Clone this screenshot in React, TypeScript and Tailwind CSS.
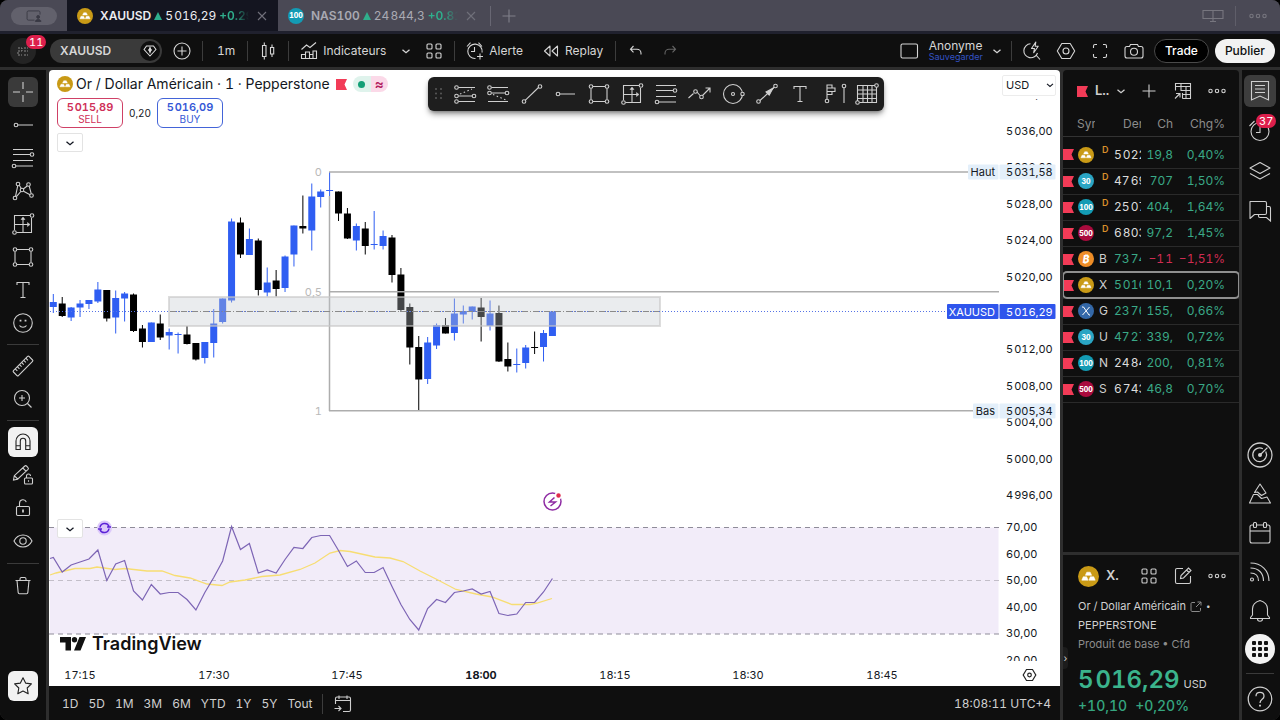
import type { ReactNode } from 'react';
import clsx from 'clsx';

type Tone = 'up' | 'down' | 'flat';

interface WatchRow {
  id: string;
  badge: BadgeKind;
  symbol: string;
  delayed?: boolean;
  last: string;
  lastTone: Tone;
  change: string;
  percent: string;
  tone: Tone;
}

type BadgeKind = 'gold' | '30' | '100' | '500' | 'btc' | 'x';

const WATCHLIST: WatchRow[] = [
  { id: 'gc', badge: 'gold', symbol: '', delayed: true, last: '5\u200a022', lastTone: 'flat', change: '19,8', percent: '0,40%', tone: 'up' },
  { id: 'ym', badge: '30', symbol: '', delayed: true, last: '47\u200a69', lastTone: 'flat', change: '707', percent: '1,50%', tone: 'up' },
  { id: 'nq', badge: '100', symbol: '', delayed: true, last: '25\u200a07', lastTone: 'flat', change: '404,', percent: '1,64%', tone: 'up' },
  { id: 'es', badge: '500', symbol: '', delayed: true, last: '6\u200a803', lastTone: 'flat', change: '97,2', percent: '1,45%', tone: 'up' },
  { id: 'btc', badge: 'btc', symbol: 'B', last: '73\u200a74', lastTone: 'up', change: '−1\u200a1', percent: '−1,51%', tone: 'down' },
  { id: 'xau', badge: 'gold', symbol: 'X', last: '5\u200a016', lastTone: 'up', change: '10,1', percent: '0,20%', tone: 'up' },
  { id: 'ger', badge: 'x', symbol: 'G', last: '23\u200a76', lastTone: 'up', change: '155,', percent: '0,66%', tone: 'up' },
  { id: 'us30', badge: '30', symbol: 'U', last: '47\u200a27', lastTone: 'up', change: '339,', percent: '0,72%', tone: 'up' },
  { id: 'nas', badge: '100', symbol: 'N', last: '24\u200a84', lastTone: 'flat', change: '200,', percent: '0,81%', tone: 'up' },
  { id: 'spx', badge: '500', symbol: 'S', last: '6\u200a743', lastTone: 'flat', change: '46,8', percent: '0,70%', tone: 'up' },
];

const TONES: Record<Tone, string> = {
  up: 'text-[#3aa987]',
  down: 'text-[#d02c52]',
  flat: 'text-[#dbdbdb]',
};

// [high, low, body top, body bottom, rising], one per minute from 17:12
const CANDLES: [number, number, number, number, 0 | 1][] = [
  [294, 313, 302, 307, 1], [297, 317, 303.5, 316, 0], [307, 321, 307.5, 317.5, 1], [300, 317, 303.5, 307.5, 1],
  [300, 309, 300, 304, 1], [282, 303, 289.5, 301.5, 1], [290, 321.5, 290, 318.5, 0], [290.5, 333.5, 298, 317.5, 1],
  [292, 321.5, 293.5, 298.5, 1], [293.5, 332, 294.5, 331, 0], [325, 347.5, 328.5, 342, 0], [322.5, 342, 322.5, 342, 1],
  [314.5, 340, 323.5, 337.5, 0], [328.5, 349.5, 332, 335.5, 1], [332.5, 353.5, 334, 335, 1], [326, 344.5, 334.5, 344, 0],
  [343, 360.5, 343, 359.5, 0], [342, 363.5, 342, 358, 1], [309, 357.5, 323.5, 343, 1], [298.5, 323.5, 298.5, 322, 1],
  [218.5, 302.5, 221.5, 300.5, 1], [217.5, 258, 222.5, 254.5, 0], [228.5, 255, 239, 255, 1], [238.5, 295.5, 240.5, 290, 0],
  [267.5, 296.5, 282.5, 292.5, 1], [270, 296.5, 280.5, 289, 0], [255.5, 292, 256.5, 288, 1], [225.5, 266.5, 225.5, 254.5, 1],
  [195.5, 233.5, 226, 228.5, 0], [183.5, 250.5, 196.5, 230.5, 1], [189.5, 207.5, 191.5, 197, 1], [172, 196, 190, 191, 1],
  [191.5, 221, 191.5, 213.5, 0], [208, 239, 213.5, 238.5, 0], [223.5, 250.5, 226, 240.5, 1], [222, 254.5, 228.5, 246, 0],
  [211, 249.5, 244, 245, 1], [230.5, 249.5, 236, 246, 1], [235, 282.5, 237.5, 275, 0], [268, 312, 274.5, 310, 0],
  [303.5, 364.5, 307, 347.5, 0], [336, 411, 347, 379.5, 0], [337, 384, 342.5, 379, 1], [323.5, 349, 325, 345.5, 1],
  [318, 333.5, 325, 333.5, 0], [298.5, 340.5, 313.5, 333, 1], [305.5, 323.5, 311, 314.5, 1], [306.5, 319.5, 306.5, 312, 1],
  [298, 341.5, 307.5, 317, 0], [300.5, 330.5, 313.5, 326, 1], [305.5, 362, 313, 361.5, 0], [342.5, 371.5, 359, 366.5, 0],
  [348.5, 372.5, 364, 365, 1], [345, 368.5, 347.5, 363, 1], [331.5, 354, 347, 348, 0], [330, 361.5, 333, 347, 1],
  [311.5, 336, 311.5, 336, 1],
];

const RSI = [
  557.5, 572, 565, 562, 559, 550, 580.5, 564, 560.5, 591, 600, 584.5, 594, 592.5, 592.5, 599.5, 610, 592.5, 577.5,
  561, 526.5, 549.5, 543.5, 573, 570, 573, 559.5, 547.5, 548.5, 537.5, 535.5, 535.5, 550.5, 566.5, 561, 572.5, 572.5,
  567.5, 586.5, 604.5, 619.5, 630, 608.5, 599.5, 602.5, 592.5, 591, 589, 594, 591.5, 613.5, 615.5, 614, 602.5, 602.5,
  592, 578.5,
];

const RSI_MA =
  '50,575 56,573 75,568.5 90,568.5 97,567 115,569.5 125,568.5 147,571 162,571 175,575.5 190,578 207,584 222,585.5 230,582 245,580 262,576.5 280,575 300,569.5 315,563 330,553 340,550.5 350,551.5 375,557 390,558 403,561.5 420,571 436,579 456,589.5 476,594 492,597 512,604.5 530,604.5 537,603 552,598.5';

const PRICE_TICKS: [string, number][] = [
  ['5\u200a040,00', 94], ['5\u200a036,00', 131], ['5\u200a032,00', 167], ['5\u200a028,00', 204], ['5\u200a024,00', 240],
  ['5\u200a020,00', 277], ['5\u200a012,00', 349], ['5\u200a008,00', 386], ['5\u200a004,00', 422], ['5\u200a000,00', 459],
  ['4\u200a996,00', 495], ['70,00', 527], ['60,00', 554], ['50,00', 580], ['40,00', 607], ['30,00', 633], ['20,00', 660],
];

const TIME_TICKS: [string, number][] = [
  ['17:15', 80], ['17:30', 214], ['17:45', 347], ['18:00', 481], ['18:15', 615], ['18:30', 748], ['18:45', 882],
];

const RANGES = ['1D', '5D', '1M', '3M', '6M', 'YTD', '1Y', '5Y', 'Tout'];

const timeX = (i: number) => 53.3 + i * 8.913;

/* ---------- icons ---------- */

function Icon({ children, className }: { children: ReactNode; className?: string }) {
  return (
    <svg
      viewBox="0 0 28 28"
      className={clsx('shrink-0', className ?? 'size-7')}
      fill="none"
      stroke="currentColor"
      strokeWidth={1.1}
      aria-hidden="true"
    >
      {children}
    </svg>
  );
}

function Node({ x, y }: { x: number; y: number }) {
  return <circle cx={x} cy={y} r={1.8} />;
}

const CrossIcon = () => <Icon><path d="M4 14h7M17 14h7M14 4v7M14 17v7" /></Icon>;
const RayIcon = () => <Icon><Node x={7} y={14} /><path d="M9 14h15" /></Icon>;
const FibIcon = () => (
  <Icon>
    <path d="M4 5.500h20M4 10.500h17M4 16.500h20M7 22h17" />
    <Node x={23} y={10.5} /><Node x={5} y={22} />
  </Icon>
);
const PatternIcon = () => (
  <Icon>
    <path d="M8.700 8.800 6.500 19.300M10.300 8.300l2 3.200M14.300 12l3.900-3M20.200 9.200l2 7.500M7.400 19.700l4.400-5.200M14.600 14.200l6.400 3.500" />
    <Node x={9} y={7} /><Node x={19.5} y={7.5} /><Node x={22.5} y={18.5} /><Node x={6} y={21} /><Node x={13} y={13} />
  </Icon>
);
const PositionIcon = () => (
  <Icon>
    <path d="M21 5.500H5.500V20M7.500 22.500h15V8M14 9v13.500M5.500 14.500H19" />
    <path d="m12 9.500 2-2.500 2 2.500ZM18.500 12.500l2.500 2-2.500 2Z" fill="currentColor" strokeWidth={0.5} />
    <Node x={23} y={5.5} /><Node x={5.5} y={22.5} />
  </Icon>
);
const RectIcon = () => (
  <Icon>
    <path d="M8 6.500h12M8 21.500h12M6 8.500v11M22 8.500v11" />
    <Node x={6} y={6.5} /><Node x={22} y={6.5} /><Node x={6} y={21.5} /><Node x={22} y={21.5} />
  </Icon>
);
const TextIcon = () => <Icon><path d="M8 9V6.500h12V9M14 6.500v15M11.500 21.500h5" /></Icon>;
const SmileIcon = () => (
  <Icon>
    <circle cx="14" cy="14" r="9.300" />
    <path d="M10.500 16.500c1.500 2.300 5.500 2.300 7 0" />
    <path d="M11.500 10.800v1.600M16.500 10.800v1.600" strokeWidth={1.8} />
  </Icon>
);
const RulerIcon = () => (
  <Icon>
    <g transform="rotate(-45 14 14)">
      <rect x="3" y="10.500" width="22" height="7" rx="1" />
      <path d="M6.500 10.500v3M9.500 10.500v3M12.500 10.500v3M15.500 10.500v3M18.500 10.500v3M21.500 10.500v3" />
    </g>
  </Icon>
);
const ZoomIcon = () => <Icon><circle cx="13" cy="13" r="7.500" /><path d="m18.500 18.500 4 4M13 10v6M10 13h6" /></Icon>;
const MagnetIcon = () => (
  <Icon>
    <path d="M7 21.500V13a7 7 0 0 1 14 0v8.500h-4.300V13a2.700 2.700 0 0 0-5.400 0v8.500ZM7 17.800h4.300M16.700 17.800H21" />
  </Icon>
);
const PencilLockIcon = () => (
  <Icon>
    <path d="m4.500 19 .8-4.300L15.800 5c.5-.5 1.200-.5 1.700 0l1.500 1.600c.5.5.5 1.200 0 1.700L8.600 18.200ZM13.800 7l3.200 3.200M5.500 14.800l3.200 3.200" />
    <rect x="15.500" y="17" width="8" height="6" rx="1" />
    <path d="M17.500 17v-2a2 2 0 0 1 4 0M19.500 19.300v1.500" />
  </Icon>
);
const LockIcon = () => (
  <Icon>
    <rect x="7.500" y="12.500" width="13" height="9" rx="1.200" />
    <path d="M10.500 12.500V9.300a3.500 3.500 0 0 1 6.800-1.200" />
    <path d="M14 15.500v3" strokeWidth={1.8} />
  </Icon>
);
const EyeIcon = () => (
  <Icon><path d="M5 14c4-8 14-8 18 0-4 8-14 8-18 0Z" /><circle cx="14" cy="14" r="3.200" /></Icon>
);
const TrashIcon = () => (
  <Icon><path d="M6.500 8.500h15M8 8.500l1.200 12.200c.1.700.5 1 1.100 1h7.400c.6 0 1-.3 1.100-1L20 8.500M11 8.500V7c0-.9.500-1.500 1.400-1.500h3.200c.9 0 1.400.6 1.400 1.500v1.500" /></Icon>
);
const StarIcon = () => (
  <Icon><path d="m14 5.800 2.600 5.300 5.800.8-4.200 4.100 1 5.800-5.200-2.700-5.200 2.700 1-5.800-4.200-4.100 5.800-.8Z" strokeLinejoin="round" /></Icon>
);
const ChevronIcon = ({ className }: { className?: string }) => (
  <Icon className={className}><path d="m10.500 12.700 3.500 3 3.500-3" strokeWidth={1.3} /></Icon>
);
const PlusCircleIcon = () => <Icon><circle cx="14" cy="14" r="8" /><path d="M14 9.500v9M9.500 14h9" /></Icon>;
const CandlesIcon = () => (
  <Icon><path d="M8.500 8.500H12v11H8.500zM10.300 5.500v3M10.300 19.500v3M16.500 10.500h3.200v6.500h-3.200zM18 7.500v3M18 17v3" /></Icon>
);
const IndicatorsIcon = () => (
  <Icon>
    <path d="M6.500 21.500v-4h4v4zM10.500 21.500V15h4v6.500M14.500 17.500h3.500v4M18 21.500V14h3.500v7.500ZM6.500 21.500h15" />
    <path d="m6.500 12.500 5-4.500 3.500 2.500 6-5" />
  </Icon>
);
const GridIcon = () => (
  <Icon>
    <rect x="7" y="7" width="5" height="5" rx="1" /><rect x="16" y="7" width="5" height="5" rx="1" />
    <rect x="7" y="16" width="5" height="5" rx="1" /><rect x="16" y="16" width="5" height="5" rx="1" />
  </Icon>
);
const AlertIcon = () => (
  <Icon>
    <path d="M14.500 21.500a7.200 7.200 0 1 1 6.600-6M13.500 10v4.500H10M6 9.500l3.500-3.800M17.500 5.700 21 9.500M19 16.500v6M16 19.500h6" />
  </Icon>
);
const ReplayIcon = () => <Icon><path d="M13 9v10l-5.500-5ZM20.500 9v10L15 14Z" strokeLinejoin="round" /></Icon>;
const UndoIcon = () => <Icon><path d="m11.500 9-3 3.200 3 3.200M8.800 12.200H15a4 4 0 0 1 4 4v1.300" /></Icon>;
const RedoIcon = () => <Icon><path d="m16.500 9 3 3.200-3 3.200M19.200 12.200H13a4 4 0 0 0-4 4v1.300" /></Icon>;
const LayoutIcon = () => <Icon><rect x="6" y="7" width="16.500" height="14" rx="1.500" /></Icon>;
const QuickSearchIcon = () => (
  <Icon>
    <path d="M12.500 6.800a7 7 0 1 0 7 9.200M18 18l4 4.500M17.800 5 13.500 11.500h3l-.8 4.200 4.500-6.500h-3Z" strokeLinejoin="round" />
  </Icon>
);
const HexIcon = ({ className }: { className?: string }) => (
  <Icon className={className}>
    <path d="M9.800 6.500h8.400L22.700 14l-4.500 7.500H9.800L5.300 14Z" strokeLinejoin="round" /><circle cx="14" cy="14" r="3" />
  </Icon>
);
const FullscreenIcon = () => (
  <Icon><path d="M7.500 11V9c0-1 .5-1.500 1.500-1.500h2M17 7.500h2c1 0 1.500.5 1.500 1.500v2M20.500 17v2c0 1-.5 1.500-1.500 1.500h-2M11 20.500H9c-1 0-1.500-.5-1.500-1.500v-2" /></Icon>
);
const CameraIcon = () => (
  <Icon>
    <path d="M10.500 7.500h7l1 2H21c1.300 0 2 .7 2 2V19c0 1.300-.7 2-2 2H7c-1.300 0-2-.7-2-2v-7.500c0-1.300.7-2 2-2h2.500Z" />
    <circle cx="14" cy="14.800" r="3.500" />
  </Icon>
);
const DotsIcon = () => (
  <Icon><circle cx="7.500" cy="14" r="1.700" /><circle cx="14" cy="14" r="1.700" /><circle cx="20.500" cy="14" r="1.700" /></Icon>
);
const PlusIcon = () => <Icon><path d="M14 7.500v13M7.500 14h13" /></Icon>;
const CloseIcon = () => <Icon><path d="m10 10 8 8M18 10l-8 8" /></Icon>;
const TableIcon = () => (
  <Icon>
    <path d="M6.500 13.500v-7h15v15h-8M6.500 9.500h15M12 6.500v7.500M17 9.500v12M12 13.500h9.500M13.500 17.500h8M13.500 16v5.500M6 21.500l4.500-4.500M7 16.500h4v4" />
  </Icon>
);

/* favourites bar only */
const ChannelUpIcon = () => (
  <Icon>
    <path d="M7.500 7.500H24M7.500 16h13.500M7.500 21.500H24" />
    <path d="m9 14 12-5" strokeDasharray="1.500 2.500" />
    <Node x={5.5} y={7.5} /><Node x={5.5} y={16} /><Node x={23} y={16} /><Node x={5.5} y={21.5} />
  </Icon>
);
const ChannelDownIcon = () => (
  <Icon>
    <path d="M7.500 7.500H24M7.500 13h13.500M4 21.500h20" />
    <path d="m9 14.500 13 5.500" strokeDasharray="1.500 2.500" />
    <Node x={5.5} y={7.5} /><Node x={5.5} y={13} /><Node x={23} y={13} />
  </Icon>
);
const TrendLineIcon = () => <Icon><path d="M7.200 20.300 20.500 7.500" /><Node x={6} y={21.5} /><Node x={22} y={6.5} /></Icon>;
const PathIcon = () => (
  <Icon>
    <path d="m3.500 18 5-4.500M12 12l3 3.500M17.500 15.500 25 8M20.500 8H25v4.500" />
    <Node x={10.5} y={11.5} /><Node x={16.5} y={17} />
  </Icon>
);
const CircleToolIcon = () => (
  <Icon><circle cx="14" cy="14" r="9.500" /><circle cx="14" cy="14" r="1.500" /><circle cx="23.500" cy="14" r="1.700" fill="#1e1e1e" /></Icon>
);
const ArrowToolIcon = () => (
  <Icon>
    <path d="M7 20.500 21 7.500" /><path d="m13 12 7-3.800-3.800 7Z" fill="currentColor" />
    <Node x={5.5} y={21.5} /><Node x={22.5} y={6} />
  </Icon>
);
const VolumeProfileIcon = () => (
  <Icon>
    <path d="M7 4.500V19M7 5h5v3H7M7 8h8v3.500H7M7 11.500h5v3H7M24 8v15" />
    <Node x={7} y={21} /><Node x={24} y={6} />
  </Icon>
);
const GannIcon = () => (
  <Icon>
    <path d="M22 5.500H4.500V21M6.500 22.500h17V7M10 5.500v17M14.500 5.500v17M19 5.500v17M4.500 10h19M4.500 14h19M4.500 18.500h19" />
    <Node x={23.5} y={5.5} /><Node x={4.5} y={22.5} />
  </Icon>
);

/* right rail only */
const WatchlistIcon = () => (
  <Icon><path d="M5.500 4.500h17v18.500l-8.500-4-8.500 4ZM9 8.500h10M9 12h10M9 15.500h10" /></Icon>
);
const AlarmIcon = () => <Icon><circle cx="14" cy="14.500" r="9" /><path d="M14 9v6.500h-4M3.500 9 8.500 4" /></Icon>;
const LayersIcon = () => (
  <Icon><path d="m14 5.500 10 5.500-10 5.500L4 11ZM4 16.500l10 5.500 10-5.500" strokeLinejoin="round" /></Icon>
);
const ChatIcon = () => (
  <Icon>
    <path d="M4 4.500h15c1 0 1.500.5 1.500 1.500v10c0 1-.5 1.500-1.500 1.500H8.500L4 21.500Z" strokeLinejoin="round" />
    <path d="M20.500 9.500H23c1 0 1.500.5 1.500 1.500v13l-4-3.500h-6.500c-1 0-1.500-.5-1.500-1.500v-1.500" />
  </Icon>
);
const RadarIcon = () => (
  <Icon className="size-8">
    <circle cx="14" cy="14" r="10.500" /><path d="M19 11a6 6 0 1 1-2.500-2.500M14 14l6.500-6.500" />
    <circle cx="14" cy="14" r="1.200" fill="currentColor" />
  </Icon>
);
const PineIcon = () => (
  <Icon>
    <path d="m14 4-5.500 8.500 3-.5 4 3.500 4.500-2.500ZM7.500 14.500 3.500 23h21l-3.500-6-5.500 1.500-4-4Z" strokeLinejoin="round" />
  </Icon>
);
const CalendarIcon = () => (
  <Icon>
    <rect x="4" y="6" width="20" height="18" rx="2" /><path d="M4 12h20" />
    <rect x="7.500" y="3.500" width="3" height="5" rx="1" fill="#0f0f0f" /><rect x="17.500" y="3.500" width="3" height="5" rx="1" fill="#0f0f0f" />
  </Icon>
);
const FeedIcon = () => (
  <Icon><circle cx="6" cy="21.500" r="1.500" /><path d="M4.500 15c5 0 8 3 8 8M4.500 10c8 0 13 5 13 13M4.500 5C15.500 5 23 12.500 23 23" /></Icon>
);
const BellIcon = () => (
  <Icon>
    <path d="M14 3.500c-5 1.500-7.500 4-7.500 8.500V18l-2 2.500v1h19v-1l-2-2.500v-6c0-4.500-2.500-7-7.500-8.500ZM11.500 22c0 3 5 3 5 0" strokeLinejoin="round" />
  </Icon>
);
const HelpIcon = () => (
  <Icon className="size-8">
    <circle cx="14" cy="14" r="10.300" /><path d="M10.500 11.500c0-4.500 7-4.500 7 0 0 3-3.500 2.500-3.500 6" /><path d="M14 19v1.500" strokeWidth={1.6} />
  </Icon>
);

function GoldBadge({ className = 'size-4' }: { className?: string }) {
  return (
    <svg viewBox="0 0 16 16" className={clsx('shrink-0', className)} aria-hidden="true">
      <circle cx="8" cy="8" r="8" fill="#c99a16" />
      <path d="M6.700 4.700h2.600l1.100 2.400H5.600ZM4 8.200h2.600l1.100 2.600H2.900ZM9.400 8.200H12l1.100 2.600H8.300Z" fill="#fff" stroke="#fff" strokeWidth=".4" strokeLinejoin="round" />
    </svg>
  );
}

function SymbolBadge({ kind }: { kind: BadgeKind }) {
  if (kind === 'gold') return <GoldBadge />;
  const colors = {
    '30': 'bg-[#2aa5c4]',
    '100': 'bg-[#139bb4]',
    '500': 'bg-[#a90b3d]',
    btc: 'bg-[#ee8d27]',
    x: 'bg-[#3468a8]',
  };
  return (
    <span className={clsx('flex size-4 shrink-0 items-center justify-center rounded-full text-[7px] leading-none font-extrabold text-white', colors[kind])}>
      {kind === 'btc' && <span className="text-[10px] italic">₿</span>}
      {kind === 'x' && (
        <svg viewBox="0 0 10 10" className="size-2.5" fill="none" stroke="white" aria-hidden="true">
          <path d="M1 1h1.500L8 9h1M8.500 1 1.500 9" />
        </svg>
      )}
      {kind !== 'btc' && kind !== 'x' && kind}
    </span>
  );
}

function Flag() {
  return (
    <svg viewBox="0 0 11 11" className="size-[11px] shrink-0" aria-hidden="true">
      <path d="M0 0h11L8.500 5.500 11 11H0Z" fill="#f23b57" />
    </svg>
  );
}

function Triangle() {
  return (
    <svg viewBox="0 0 8 8" className="size-2 shrink-0" aria-hidden="true">
      <path d="M4 0 8 8H0Z" fill="#2fae8c" />
    </svg>
  );
}

function IconButton({ label, children, className }: { label: string; children: ReactNode; className?: string }) {
  return (
    <button type="button" aria-label={label} className={clsx('flex shrink-0 items-center justify-center', className)}>
      {children}
    </button>
  );
}

const Divider = ({ className = 'bg-[#3c3c3c]' }: { className?: string }) => (
  <span className={clsx('h-5 w-px shrink-0', className)} />
);

/* ---------- window tabs ---------- */

function TabBar() {
  const fade = 'w-[30px] shrink-0 overflow-hidden [mask-image:linear-gradient(to_right,black_50%,transparent)]';
  return (
    <nav className="flex h-[34px] shrink-0 border-b-[3px] border-[#20212e] bg-[#4a4955] text-xs whitespace-nowrap text-[#a9a9b2]">
      <div className="flex w-[67px] items-center pl-[11px]">
        <button type="button" aria-label="Fenêtre" className="flex h-[18px] w-[46px] items-center justify-center rounded-full bg-[#62616c] text-[#393944]">
          <svg viewBox="0 0 17 13" className="h-3 w-4" fill="none" stroke="currentColor" aria-hidden="true">
            <path d="M9 11H2.500C1.500 11 1 10.500 1 9.500v-7C1 1.500 1.500 1 2.500 1h11c1 0 1.500.5 1.500 1.500V5" />
            <circle cx="13" cy="7.500" r="1.600" fill="currentColor" /><path d="M10 12.500c0-3 6-3 6 0Z" fill="currentColor" />
          </svg>
        </button>
      </div>
      <a href="#xauusd" className="flex w-[211px] items-center gap-[3px] bg-[#141520] pl-2.5 text-[#ececf0]">
        <GoldBadge />
        <span className="ml-1 font-semibold">XAUUSD</span>
        <Triangle />
        <span>5{'\u200a'}016,29</span>
        <span className={clsx('font-semibold text-[#2fae8c]', fade)}>+0.29</span>
        <span className="-ml-1 text-[#70707a]"><CloseIcon /></span>
      </a>
      <a href="#nas100" className="flex w-[212px] items-center gap-[3px] pl-2.5">
        <SymbolBadge kind="100" />
        <span className="ml-1 font-semibold">NAS100</span>
        <Triangle />
        <span>24{'\u200a'}844,3</span>
        <span className={clsx('font-semibold text-[#2fae8c]', fade)}>+0.81</span>
        <span className="-ml-1 text-[#70707a]"><CloseIcon /></span>
      </a>
      <div className="flex items-center gap-1 text-[#80808a]">
        <Divider className="bg-[#686773]" />
        <IconButton label="Nouvel onglet"><PlusIcon /></IconButton>
      </div>
      <div className="ml-auto flex items-center gap-2 pr-2 text-[#77767f]">
        <IconButton label="Disposition">
          <Icon><path d="M4 8.500h20v8H4ZM14 8.500v11M11 19.500h6" /></Icon>
        </IconButton>
        <Divider className="bg-[#5f5e69]" />
        <IconButton label="Menu"><DotsIcon /></IconButton>
      </div>
    </nav>
  );
}

/* ---------- top toolbar ---------- */

function TopToolbar() {
  return (
    <header className="flex h-[33px] shrink-0 items-center bg-[#0f0f0f] text-xs text-[#d6d6d6]">
      <button type="button" aria-label="Compte, 11 notifications" className="relative ml-2.5 flex size-[26px] shrink-0 items-center justify-center rounded-full bg-[#242424] text-[#8a8a8a]">
        <svg viewBox="0 0 14 10" className="h-2.5 w-3.5" fill="none" stroke="currentColor" strokeDasharray="2 1" aria-hidden="true">
          <path d="M2 2h4v3H2v4h4M8 2h4M8 5h4M8 9h4" />
        </svg>
        <span className="absolute -top-[3px] left-4 rounded-full bg-[#dd1f4c] px-[3px] text-[11px] leading-[14px] text-white">11</span>
      </button>
      <button type="button" className="ml-3.5 flex h-6 w-28 shrink-0 items-center justify-between rounded-full bg-[#3a3a3a] pr-0.5 pl-2.5 font-semibold">
        XAUUSD
        <span className="flex size-5 items-center justify-center rounded-full bg-[#0f0f0f]">
          <svg viewBox="0 0 16 16" className="size-4" fill="none" stroke="#ddd" strokeWidth="1.100" aria-hidden="true">
            <path d="M4.500 3h7L14 6.500 8 13 2 6.500Z" strokeLinejoin="round" /><path d="M6 7h4" /><path d="m8 4.500.9 2.500L8 9.500 7.100 7Z" fill="#ddd" />
          </svg>
        </span>
      </button>
      <IconButton label="Comparer" className="ml-1.5"><PlusCircleIcon /></IconButton>
      <Divider className="ml-1.5 bg-[#3c3c3c]" />
      <button type="button" className="ml-3.5">1m</button>
      <Divider className="ml-3 bg-[#3c3c3c]" />
      <IconButton label="Type de graphique" className="ml-1.5"><CandlesIcon /></IconButton>
      <Divider className="ml-1.5 bg-[#3c3c3c]" />
      <button type="button" className="ml-1.5 flex items-center"><IndicatorsIcon />Indicateurs</button>
      <IconButton label="Favoris" className="ml-1.5"><ChevronIcon /></IconButton>
      <IconButton label="Modèles"><GridIcon /></IconButton>
      <Divider className="ml-1.5 bg-[#3c3c3c]" />
      <button type="button" className="ml-1.5 flex items-center"><AlertIcon />Alerte</button>
      <button type="button" className="ml-3.5 flex items-center"><ReplayIcon />Replay</button>
      <Divider className="ml-3 bg-[#3c3c3c]" />
      <IconButton label="Annuler" className="ml-1.5"><UndoIcon /></IconButton>
      <IconButton label="Rétablir" className="ml-1.5 text-[#666]"><RedoIcon /></IconButton>
      <div className="ml-auto flex items-center gap-1.5 pr-[5px]">
        <IconButton label="Disposition"><LayoutIcon /></IconButton>
        <button type="button" className="-mr-1.5 flex items-center text-left">
          <span className="flex flex-col">
            <span className="text-xs leading-3">Anonyme</span>
            <span className="text-[9px] leading-[9px] text-[#3352c4]">Sauvegarder</span>
          </span>
          <ChevronIcon />
        </button>
        <Divider />
        <IconButton label="Recherche rapide"><QuickSearchIcon /></IconButton>
        <IconButton label="Paramètres"><HexIcon /></IconButton>
        <IconButton label="Plein écran"><FullscreenIcon /></IconButton>
        <IconButton label="Capture"><CameraIcon /></IconButton>
        <button type="button" className="h-6 rounded-full border border-[#4a4a4a] bg-black px-2.5 font-medium text-white">Trade</button>
        <button type="button" className="h-6 rounded-full bg-[#f2f2f2] px-2.5 font-medium text-[#0f0f0f]">Publier</button>
      </div>
    </header>
  );
}

/* ---------- drawing tools ---------- */

function DrawingTools() {
  const tool = 'h-[30px] w-[30px] rounded-md';
  const line = 'h-px w-8 shrink-0 bg-[#3a3a3a]';
  return (
    <aside className="flex w-[46px] shrink-0 flex-col items-center gap-[3px] bg-[#0f0f0f] pt-[7px] pb-[19px] text-[#cfcfcf]">
      <IconButton label="Curseur" className={clsx(tool, 'bg-[#3a3a3a]')}><CrossIcon /></IconButton>
      <IconButton label="Lignes" className={tool}><RayIcon /></IconButton>
      <IconButton label="Fibonacci" className={tool}><FibIcon /></IconButton>
      <IconButton label="Motifs" className={tool}><PatternIcon /></IconButton>
      <IconButton label="Prévision" className={tool}><PositionIcon /></IconButton>
      <IconButton label="Formes" className={tool}><RectIcon /></IconButton>
      <IconButton label="Texte" className={tool}><TextIcon /></IconButton>
      <IconButton label="Icônes" className={tool}><SmileIcon /></IconButton>
      <span className={clsx(line, 'my-[3px]')} />
      <IconButton label="Mesure" className={tool}><RulerIcon /></IconButton>
      <IconButton label="Zoom" className={tool}><ZoomIcon /></IconButton>
      <span className={clsx(line, 'my-[3px]')} />
      <IconButton label="Aimant" className={clsx(tool, 'bg-[#f2f2f2] text-[#222]')}><MagnetIcon /></IconButton>
      <IconButton label="Mode dessin" className={tool}><PencilLockIcon /></IconButton>
      <IconButton label="Verrouiller" className={tool}><LockIcon /></IconButton>
      <IconButton label="Masquer" className={tool}><EyeIcon /></IconButton>
      <span className={clsx(line, 'my-1')} />
      <IconButton label="Supprimer" className={tool}><TrashIcon /></IconButton>
      <IconButton label="Outils favoris" className={clsx(tool, 'mt-auto bg-[#f2f2f2] text-[#222]')}><StarIcon /></IconButton>
    </aside>
  );
}

/* ---------- chart ---------- */

function PriceTag({ x, y, name, value, active }: { x: number; y: number; name: string; value: string; active?: boolean }) {
  const fill = active ? '#2f55ec' : '#e3effa';
  const ink = active ? '#ffffff' : '#131722';
  return (
    <g>
      <rect x={x} y={y - 7.5} width={998.5 - x} height={15} rx={1} fill={fill} />
      <rect x={999.5} y={y - 7.5} width={56} height={15} rx={1} fill={fill} />
      <text x={995} y={y + 4} textAnchor="end" fill={ink}>{name}</text>
      <text x={1006} y={y + 4} fill={ink}>{value}</text>
    </g>
  );
}

function ChartCanvas() {
  return (
    <svg viewBox="49 70 1011 616" preserveAspectRatio="xMinYMin meet" className="h-full w-full text-[11px]" role="img" aria-label="XAUUSD 1 minute">
      {/* candles */}
      {CANDLES.map(([high, low, top, bottom, rising], i) => {
        const color = rising ? '#2f5ef2' : '#000000';
        return (
          <g key={i} fill={color}>
            <rect x={timeX(i) - 0.5} y={high} width={1} height={low - high} />
            <rect x={timeX(i) - 3.5} y={top} width={7} height={bottom - top} />
          </g>
        );
      })}

      {/* retracement levels */}
      <path d="M329 172H968M329 291.700H999M329 410.700H973M329.500 196V411" stroke="#adadad" strokeWidth={1.5} />
      <g fill="#b9b9b9" textAnchor="end">
        <text x={322} y={176}>0</text>
        <text x={322} y={296}>0,5</text>
        <text x={322} y={415}>1</text>
      </g>

      {/* zone and last price */}
      <rect x={169} y={297} width={491} height={29} fill="#c3c8cd" fillOpacity={0.35} stroke="#c6c6c6" strokeWidth={2} strokeOpacity={0.6} />
      <path d="M50 311.500H947" stroke="#5673e6" strokeDasharray="1 2" />
      <path d="M170 311.500H659" stroke="#8a8a8a" strokeDasharray="6 2 1 2" />

      {/* rsi */}
      <rect x={50} y={527.5} width={948.5} height={106.5} fill="#f2ecf9" />
      <g stroke="#8f8c99" strokeDasharray="5 4">
        <path d="M49 527.500H999M49 634H999" />
        <path d="M49 580.500H999" stroke="#c3bec9" />
      </g>
      <polyline points={RSI_MA} fill="none" stroke="#f7dd72" strokeWidth={1.3} />
      <polyline points={`50,558.5 ${RSI.map((y, i) => `${timeX(i)},${y}`).join(' ')}`} fill="none" stroke="#7d65b5" strokeWidth={1.2} />

      {/* axes */}
      <g fill="#131722">
        {PRICE_TICKS.map(([label, y]) => (
          <text key={label} x={1006} y={y + 4}>{label}</text>
        ))}
        <rect x={1000} y={661} width={58} height={10} fill="#fff" />
        {TIME_TICKS.map(([label, x]) => (
          <text key={label} x={x} y={679} textAnchor="middle" fontWeight={label === '18:00' ? 700 : 400}>{label}</text>
        ))}
      </g>
      <PriceTag x={968} y={172} name="Haut" value={'5\u200a031,58'} />
      <PriceTag x={973} y={411} name="Bas" value={'5\u200a005,34'} />
      <PriceTag x={947} y={311.5} name="XAUUSD" value={'5\u200a016,29'} active />

      {/* news flash */}
      <g fill="none" stroke="#8e2ba3" strokeWidth={1.5}>
        <circle cx={552.5} cy={501.5} r={8.5} fill="#fff" />
        <path d="m554.500 497.500-5 4.500h6l-5 4" />
        <circle cx={558.5} cy={495.5} r={3} fill="#e02c4b" stroke="#fff" />
      </g>

      {/* indicator source */}
      <circle cx={104.5} cy={528} r={7.5} fill="#dcc9fa" />
      <path d="M100 527.500a4.700 4.700 0 0 1 9-1.200M109 528.500a4.700 4.700 0 0 1-9 1.200M107 527h4M98 529h4" fill="none" stroke="#5a21d6" strokeWidth={1.5} />

      {/* logo */}
      <path d="M60 637h11v13.500h-5.500v-8H60ZM79.500 637H86l-5.500 13.500h-6.500Z" fill="#111" />
      <circle cx={74.5} cy={639.7} r={2.7} fill="#111" />
      <text x={92} y={650} className="text-[18px] font-semibold" fill="#111">TradingView</text>

      <g fill="none" stroke="#222" strokeWidth={1.2}>
        <path d="M1026.500 669.500h6l3.300 5.500-3.300 5.500h-6l-3.300-5.500Z" /><circle cx={1029.5} cy={675} r={1.8} />
      </g>
    </svg>
  );
}

function Favorites() {
  const item = 'flex-1';
  return (
    <div className="absolute top-[7px] left-[379px] flex h-[34px] w-[456px] items-center rounded-md bg-[#1e1e1e] text-[#cfcfcf] shadow-md shadow-black/40">
      <svg viewBox="0 0 20 20" className="size-5" fill="#5a5a5a" aria-hidden="true">
        {[5, 9.5, 14].map((y) => (
          <g key={y}><circle cx={8} cy={y} r={1} /><circle cx={13} cy={y} r={1} /></g>
        ))}
      </svg>
      <IconButton label="Canal haussier" className={item}><ChannelUpIcon /></IconButton>
      <IconButton label="Canal baissier" className={item}><ChannelDownIcon /></IconButton>
      <IconButton label="Ligne de tendance" className={item}><TrendLineIcon /></IconButton>
      <IconButton label="Rayon horizontal" className={item}><RayIcon /></IconButton>
      <IconButton label="Rectangle" className={item}><RectIcon /></IconButton>
      <IconButton label="Fourchette prix et date" className={item}><PositionIcon /></IconButton>
      <IconButton label="Retracement" className={item}><FibIcon /></IconButton>
      <IconButton label="Chemin" className={item}><PathIcon /></IconButton>
      <IconButton label="Cercle" className={item}><CircleToolIcon /></IconButton>
      <IconButton label="Flèche" className={item}><ArrowToolIcon /></IconButton>
      <IconButton label="Texte" className={item}><TextIcon /></IconButton>
      <IconButton label="Profil de volume" className={item}><VolumeProfileIcon /></IconButton>
      <IconButton label="Boîte de Gann" className={item}><GannIcon /></IconButton>
    </div>
  );
}

function ChartPane() {
  const collapse = 'h-[19px] w-[26px] rounded-xs border border-[#e3e3e3] bg-white text-[#131722]';
  return (
    <div className="relative min-h-0 flex-1 overflow-hidden rounded-t-sm bg-white">
      <ChartCanvas />
      <div className="absolute top-1.5 left-2 flex flex-col text-[#131722]">
        <div className="flex h-4 items-center">
          <GoldBadge />
          <h1 className="ml-[3px] text-sm">Or / Dollar Américain · 1 · Pepperstone</h1>
          <span className="ml-1.5"><Flag /></span>
          <span className="ml-1.5 flex h-4 overflow-hidden rounded-full">
            <span className="flex w-[18px] items-center justify-center bg-[#dff3ec]"><span className="size-[7px] rounded-full bg-[#14a077]" /></span>
            <span className="flex w-[17px] items-center justify-center bg-[#fbd9e8] text-sm leading-none font-semibold text-[#b3205e]">≈</span>
          </span>
        </div>
        <div className="mt-1.5 flex items-center">
          <button type="button" className="flex h-[30px] w-[66px] flex-col items-center justify-center rounded-md border border-[#cf4066] text-[11px] leading-3 text-[#cf2f58]">
            <span className="font-semibold">5{'\u200a'}015,89</span>
            <span className="text-[10px]">SELL</span>
          </button>
          <span className="w-[34px] text-center text-[10px]">0,20</span>
          <button type="button" className="flex h-[30px] w-[66px] flex-col items-center justify-center rounded-md border border-[#4364d8] text-[11px] leading-3 text-[#3558d6]">
            <span className="font-semibold">5{'\u200a'}016,09</span>
            <span className="text-[10px]">BUY</span>
          </button>
        </div>
        <IconButton label="Réduire la légende" className={clsx(collapse, 'mt-[5px]')}><ChevronIcon className="size-7" /></IconButton>
      </div>
      <IconButton label="Réduire l’indicateur" className={clsx(collapse, 'absolute top-[449px] left-2')}><ChevronIcon className="size-7" /></IconButton>
      <Favorites />
      <div className="absolute top-[5px] right-1 flex bg-white pb-[3px] text-[#131722]">
        <select aria-label="Devise" className="h-[21px] w-[54px] appearance-none rounded-xs border border-[#ececec] pl-[3px] text-[11px] leading-none" defaultValue="USD">
          <option>USD</option>
        </select>
        <ChevronIcon className="pointer-events-none absolute -top-0.5 -right-1.5 size-6" />
      </div>
    </div>
  );
}

function BottomBar() {
  return (
    <footer className="flex h-[34px] shrink-0 items-center gap-2.5 bg-[#0f0f0f] px-[13px] pt-0.5 text-xs text-[#cfcfcf]">
      {RANGES.map((range) => (
        <button key={range} type="button">{range}</button>
      ))}
      <Divider />
      <IconButton label="Aller à la date" className="-ml-1">
        <Icon>
          <path d="M6.500 14V8.500c0-1 .5-1.500 1.500-1.500h12c1 0 1.500.5 1.500 1.500V20c0 1-.5 1.500-1.500 1.500h-6M6.500 10.500h15M10 5.500V9M18 5.500V9M5.500 18.500H12M9.500 16l2.500 2.500L9.500 21" />
        </Icon>
      </IconButton>
      <button type="button" className="-mr-1 ml-auto">18:08:11 UTC+4</button>
    </footer>
  );
}

/* ---------- watchlist ---------- */

function Watchlist() {
  return (
    <section className="min-h-0 flex-1 overflow-hidden rounded-t-sm bg-[#0f0f0f] text-[#cfcfcf]">
      <div className="flex h-[42px] items-center pr-2 pl-3.5">
        <Flag />
        <span className="ml-[7px] text-[13px] font-semibold">L..</span>
        <ChevronIcon className="-ml-0.5 size-7" />
        <div className="ml-auto flex items-center gap-1.5">
          <IconButton label="Ajouter un symbole"><PlusIcon /></IconButton>
          <IconButton label="Vue tableau"><TableIcon /></IconButton>
          <IconButton label="Plus"><DotsIcon /></IconButton>
        </div>
      </div>
      <table className="w-full table-fixed border-collapse text-xs whitespace-nowrap">
        <colgroup>
          <col />
          <col className="w-[27px]" />
          <col className="w-8" />
          <col className="w-[66px]" />
        </colgroup>
        <thead>
          <tr className="h-6 border-b border-[#333] text-left text-[#8c8c8c]">
            <th className="pl-3.5 font-normal"><div className="w-[18px] overflow-hidden">Sym</div></th>
            <th className="font-normal"><div className="ml-auto w-[18px] overflow-hidden">Der</div></th>
            <th className="text-right font-normal">Ch</th>
            <th className="pr-3.5 text-right font-normal">Chg%</th>
          </tr>
        </thead>
        <tbody>
          <tr className="h-1.5" aria-hidden="true" />
          {WATCHLIST.map((row) => (
            <tr
              key={row.id}
              className={clsx(
                'h-[26px] border-b border-[#2a2a2a]',
                row.id === 'xau' && 'rounded-sm outline-2 -outline-offset-1 outline-[#8f8f8f]',
              )}
            >
              <td>
                <div className="flex items-center">
                  <Flag />
                  <span className="ml-1"><SymbolBadge kind={row.badge} /></span>
                  {row.delayed ? (
                    <sup className="ml-2 text-[9px] font-semibold text-[#d98f2b]">D</sup>
                  ) : (
                    <span className="ml-[5px]">{row.symbol}</span>
                  )}
                </div>
              </td>
              <td><div className={clsx('overflow-hidden', TONES[row.lastTone])}>{row.last}</div></td>
              <td className={clsx('text-right', TONES[row.tone])}>{row.change}</td>
              <td className={clsx('pr-3.5 text-right', TONES[row.tone])}>{row.percent}</td>
            </tr>
          ))}
        </tbody>
      </table>
    </section>
  );
}

function SymbolDetails() {
  return (
    <section className="relative h-[165px] shrink-0 overflow-hidden bg-[#0f0f0f] pl-[15px] text-[11px] text-[#d0d0d0]">
      <div className="mt-[7px] flex h-7 items-center pr-2">
        <GoldBadge className="size-[21px]" />
        <span className="ml-[7px] text-[13px] font-semibold">X.</span>
        <div className="ml-auto flex items-center gap-1.5">
          <IconButton label="Panneaux"><GridIcon /></IconButton>
          <IconButton label="Note">
            <Icon><path d="M14 6.500H8c-1 0-1.500.5-1.500 1.500v12c0 1 .5 1.500 1.500 1.500h12c1 0 1.500-.5 1.500-1.500v-6M11.500 16.500l.5-3L19.500 6l2.500 2.500L14.500 16ZM17.500 8l2.500 2.500" /></Icon>
          </IconButton>
          <IconButton label="Plus"><DotsIcon /></IconButton>
        </div>
      </div>
      <p className="mt-[7px] flex items-center gap-1 leading-[19px] whitespace-nowrap">
        Or / Dollar Américain
        <svg viewBox="0 0 12 12" className="size-3" fill="none" stroke="#8a8a8a" aria-hidden="true">
          <path d="M5 1.500H2c-.5 0-1 .5-1 1v7c0 .5.500 1 1 1h7.500c.5 0 1-.5 1-1V7M6 6l5-5M7.500 1H11v3.500" />
        </svg>
        <span className="text-[8px]">•</span>
      </p>
      <p className="leading-[19px]">PEPPERSTONE</p>
      <p className="leading-[19px] text-[#8c8c8c]">Produit de base • Cfd</p>
      <p className="mt-3 flex items-baseline gap-1 leading-7 whitespace-nowrap">
        <span className="text-2xl leading-7 font-semibold text-[#3bb38c]">5{'\u200a'}016,29</span>
        USD
      </p>
      <p className="flex gap-2 text-sm leading-4 font-medium text-[#35a57f]">
        <span>+10,10</span>
        <span>+0,20%</span>
      </p>
      <button type="button" aria-label="Réduire le panneau" className="absolute top-[92px] left-0 flex h-[22px] w-[5px] items-center justify-center rounded-r-sm bg-[#1c1c1c] text-[10px]">
        ›
      </button>
    </section>
  );
}

function RightRail() {
  const item = 'h-8 w-8 rounded-md';
  return (
    <aside className="flex w-[38px] shrink-0 flex-col items-center justify-between bg-[#0f0f0f] py-[5px] pr-0.5 text-[#cfcfcf]">
      <div className="flex flex-col gap-2">
        <IconButton label="Liste de surveillance" className={clsx(item, 'bg-[#3d3d3d]')}><WatchlistIcon /></IconButton>
        <IconButton label="Alertes, 37 nouvelles" className={clsx(item, 'relative')}>
          <AlarmIcon />
          <span className="absolute -top-px left-3 rounded-full bg-[#dd1f4c] px-[3px] text-[11px] leading-[14px] text-white">37</span>
        </IconButton>
        <IconButton label="Arbre des objets" className={item}><LayersIcon /></IconButton>
        <IconButton label="Discussions" className={item}><ChatIcon /></IconButton>
      </div>
      <div className="flex flex-col items-center gap-[7px]">
        <IconButton label="Screeners" className={item}><RadarIcon /></IconButton>
        <IconButton label="Pine" className={item}><PineIcon /></IconButton>
        <IconButton label="Calendrier" className={item}><CalendarIcon /></IconButton>
        <IconButton label="Flux" className={item}><FeedIcon /></IconButton>
        <IconButton label="Notifications" className={item}><BellIcon /></IconButton>
        <IconButton label="Produits" className="size-[30px] rounded-full bg-[#f2f2f2]">
          <svg viewBox="0 0 18 18" className="size-[18px]" fill="#111" aria-hidden="true">
            {[1, 7, 13].map((y) => [1, 7, 13].map((x) => <rect key={`${x}-${y}`} x={x} y={y} width={4} height={4} rx={1} />))}
          </svg>
        </IconButton>
        <span className="my-0.5 h-px w-7 bg-[#3a3a3a]" />
        <IconButton label="Aide" className={item}><HelpIcon /></IconButton>
      </div>
    </aside>
  );
}

export default function App() {
  return (
    <div className="bg-black font-[Inter,sans-serif] tabular-nums">
      <div className="flex h-screen flex-col overflow-hidden rounded-lg bg-[#2e2e2e]">
        <TabBar />
        <TopToolbar />
        <div className="mt-[3px] flex min-h-0 flex-1 gap-[3px]">
          <DrawingTools />
          <main className="flex min-w-0 flex-1 flex-col">
            <ChartPane />
            <BottomBar />
          </main>
          <div className="flex w-[176px] shrink-0 flex-col gap-[3px]">
            <Watchlist />
            <SymbolDetails />
          </div>
          <RightRail />
        </div>
      </div>
    </div>
  );
}
